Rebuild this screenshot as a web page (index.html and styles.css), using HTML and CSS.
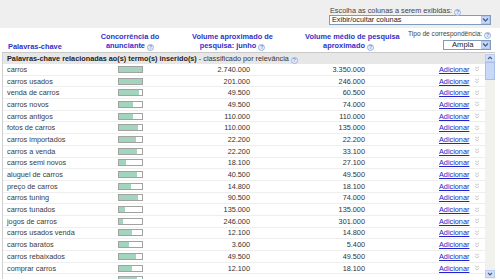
FILE: index.html
```html
<!DOCTYPE html>
<html lang="pt">
<head>
<meta charset="utf-8">
<title>Palavras-chave</title>
<link rel="stylesheet" href="styles.css">
</head>
<body>
<div class="top">
  <div class="colpick">
    <div class="lbl">Escolha as colunas a serem exibidas: <span class="help">?</span></div>
    <div class="select wide"><span class="sval">Exibir/ocultar colunas</span><span class="dd"><svg width="7" height="6" viewBox="0 0 7 6"><path d="M1 1.5 L3.5 4 L6 1.5" fill="none" stroke="#4d6185" stroke-width="1.4"/></svg></span></div>
  </div>
</div>
<div class="main">
  <div class="head">
    <div class="h h1">Palavras-chave</div>
    <div class="h">Concorrência do<br>anunciante <span class="help">?</span></div>
    <div class="h">Volume aproximado de<br>pesquisa: junho <span class="help">?</span></div>
    <div class="h">Volume médio de pesquisa<br>aproximado <span class="help">?</span></div>
    <div class="h5">
      <div class="tipo">Tipo de correspondência: <span class="help">?</span></div>
      <div class="select narrow"><span class="sval">Ampla</span><span class="dd"><svg width="7" height="6" viewBox="0 0 7 6"><path d="M1 1.5 L3.5 4 L6 1.5" fill="none" stroke="#4d6185" stroke-width="1.4"/></svg></span></div>
    </div>
  </div>
  <div class="scroll">
    <div class="list">
      <div class="sec"><b>Palavras-chave relacionadas ao(s) termo(s) inserido(s)</b> - classificado por relevância <span class="help">?</span></div>
      <div class="row"><span class="kw">carros</span><span class="bar"><span class="fill" style="width:100%"></span></span><span class="n n1">2.740.000</span><span class="n n2">3.350.000</span><span class="add"><a href="#">Adicionar</a><svg class="chev" width="6" height="6" viewBox="0 0 6 6"><path d="M1 0.8 L3 2.3 L5 0.8 M1 3.3 L3 4.8 L5 3.3" fill="none" stroke="#c4c4c4" stroke-width="0.9"/></svg></span></div>
      <div class="row"><span class="kw">carros usados</span><span class="bar"><span class="fill" style="width:100%"></span></span><span class="n n1">201.000</span><span class="n n2">246.000</span><span class="add"><a href="#">Adicionar</a><svg class="chev" width="6" height="6" viewBox="0 0 6 6"><path d="M1 0.8 L3 2.3 L5 0.8 M1 3.3 L3 4.8 L5 3.3" fill="none" stroke="#c4c4c4" stroke-width="0.9"/></svg></span></div>
      <div class="row"><span class="kw">venda de carros</span><span class="bar"><span class="fill" style="width:88%"></span></span><span class="n n1">49.500</span><span class="n n2">60.500</span><span class="add"><a href="#">Adicionar</a><svg class="chev" width="6" height="6" viewBox="0 0 6 6"><path d="M1 0.8 L3 2.3 L5 0.8 M1 3.3 L3 4.8 L5 3.3" fill="none" stroke="#c4c4c4" stroke-width="0.9"/></svg></span></div>
      <div class="row"><span class="kw">carros novos</span><span class="bar"><span class="fill" style="width:64%"></span></span><span class="n n1">49.500</span><span class="n n2">74.000</span><span class="add"><a href="#">Adicionar</a><svg class="chev" width="6" height="6" viewBox="0 0 6 6"><path d="M1 0.8 L3 2.3 L5 0.8 M1 3.3 L3 4.8 L5 3.3" fill="none" stroke="#c4c4c4" stroke-width="0.9"/></svg></span></div>
      <div class="row"><span class="kw">carros antigos</span><span class="bar"><span class="fill" style="width:64%"></span></span><span class="n n1">110.000</span><span class="n n2">110.000</span><span class="add"><a href="#">Adicionar</a><svg class="chev" width="6" height="6" viewBox="0 0 6 6"><path d="M1 0.8 L3 2.3 L5 0.8 M1 3.3 L3 4.8 L5 3.3" fill="none" stroke="#c4c4c4" stroke-width="0.9"/></svg></span></div>
      <div class="row"><span class="kw">fotos de carros</span><span class="bar"><span class="fill" style="width:86%"></span></span><span class="n n1">110.000</span><span class="n n2">135.000</span><span class="add"><a href="#">Adicionar</a><svg class="chev" width="6" height="6" viewBox="0 0 6 6"><path d="M1 0.8 L3 2.3 L5 0.8 M1 3.3 L3 4.8 L5 3.3" fill="none" stroke="#c4c4c4" stroke-width="0.9"/></svg></span></div>
      <div class="row"><span class="kw">carros importados</span><span class="bar"><span class="fill" style="width:75%"></span></span><span class="n n1">22.200</span><span class="n n2">22.200</span><span class="add"><a href="#">Adicionar</a><svg class="chev" width="6" height="6" viewBox="0 0 6 6"><path d="M1 0.8 L3 2.3 L5 0.8 M1 3.3 L3 4.8 L5 3.3" fill="none" stroke="#c4c4c4" stroke-width="0.9"/></svg></span></div>
      <div class="row"><span class="kw">carros a venda</span><span class="bar"><span class="fill" style="width:80%"></span></span><span class="n n1">22.200</span><span class="n n2">33.100</span><span class="add"><a href="#">Adicionar</a><svg class="chev" width="6" height="6" viewBox="0 0 6 6"><path d="M1 0.8 L3 2.3 L5 0.8 M1 3.3 L3 4.8 L5 3.3" fill="none" stroke="#c4c4c4" stroke-width="0.9"/></svg></span></div>
      <div class="row"><span class="kw">carros semi novos</span><span class="bar"><span class="fill" style="width:33%"></span></span><span class="n n1">18.100</span><span class="n n2">27.100</span><span class="add"><a href="#">Adicionar</a><svg class="chev" width="6" height="6" viewBox="0 0 6 6"><path d="M1 0.8 L3 2.3 L5 0.8 M1 3.3 L3 4.8 L5 3.3" fill="none" stroke="#c4c4c4" stroke-width="0.9"/></svg></span></div>
      <div class="row"><span class="kw">aluguel de carros</span><span class="bar"><span class="fill" style="width:82%"></span></span><span class="n n1">40.500</span><span class="n n2">49.500</span><span class="add"><a href="#">Adicionar</a><svg class="chev" width="6" height="6" viewBox="0 0 6 6"><path d="M1 0.8 L3 2.3 L5 0.8 M1 3.3 L3 4.8 L5 3.3" fill="none" stroke="#c4c4c4" stroke-width="0.9"/></svg></span></div>
      <div class="row"><span class="kw">preço de carros</span><span class="bar"><span class="fill" style="width:54%"></span></span><span class="n n1">14.800</span><span class="n n2">18.100</span><span class="add"><a href="#">Adicionar</a><svg class="chev" width="6" height="6" viewBox="0 0 6 6"><path d="M1 0.8 L3 2.3 L5 0.8 M1 3.3 L3 4.8 L5 3.3" fill="none" stroke="#c4c4c4" stroke-width="0.9"/></svg></span></div>
      <div class="row"><span class="kw">carros tuning</span><span class="bar"><span class="fill" style="width:85%"></span></span><span class="n n1">90.500</span><span class="n n2">74.000</span><span class="add"><a href="#">Adicionar</a><svg class="chev" width="6" height="6" viewBox="0 0 6 6"><path d="M1 0.8 L3 2.3 L5 0.8 M1 3.3 L3 4.8 L5 3.3" fill="none" stroke="#c4c4c4" stroke-width="0.9"/></svg></span></div>
      <div class="row"><span class="kw">carros tunados</span><span class="bar"><span class="fill" style="width:27%"></span></span><span class="n n1">135.000</span><span class="n n2">135.000</span><span class="add"><a href="#">Adicionar</a><svg class="chev" width="6" height="6" viewBox="0 0 6 6"><path d="M1 0.8 L3 2.3 L5 0.8 M1 3.3 L3 4.8 L5 3.3" fill="none" stroke="#c4c4c4" stroke-width="0.9"/></svg></span></div>
      <div class="row"><span class="kw">jogos de carros</span><span class="bar"><span class="fill" style="width:20%"></span></span><span class="n n1">246.000</span><span class="n n2">301.000</span><span class="add"><a href="#">Adicionar</a><svg class="chev" width="6" height="6" viewBox="0 0 6 6"><path d="M1 0.8 L3 2.3 L5 0.8 M1 3.3 L3 4.8 L5 3.3" fill="none" stroke="#c4c4c4" stroke-width="0.9"/></svg></span></div>
      <div class="row"><span class="kw">carros usados venda</span><span class="bar"><span class="fill" style="width:58%"></span></span><span class="n n1">12.100</span><span class="n n2">14.800</span><span class="add"><a href="#">Adicionar</a><svg class="chev" width="6" height="6" viewBox="0 0 6 6"><path d="M1 0.8 L3 2.3 L5 0.8 M1 3.3 L3 4.8 L5 3.3" fill="none" stroke="#c4c4c4" stroke-width="0.9"/></svg></span></div>
      <div class="row"><span class="kw">carros baratos</span><span class="bar"><span class="fill" style="width:47%"></span></span><span class="n n1">3.600</span><span class="n n2">5.400</span><span class="add"><a href="#">Adicionar</a><svg class="chev" width="6" height="6" viewBox="0 0 6 6"><path d="M1 0.8 L3 2.3 L5 0.8 M1 3.3 L3 4.8 L5 3.3" fill="none" stroke="#c4c4c4" stroke-width="0.9"/></svg></span></div>
      <div class="row"><span class="kw">carros rebaixados</span><span class="bar"><span class="fill" style="width:75%"></span></span><span class="n n1">49.500</span><span class="n n2">49.500</span><span class="add"><a href="#">Adicionar</a><svg class="chev" width="6" height="6" viewBox="0 0 6 6"><path d="M1 0.8 L3 2.3 L5 0.8 M1 3.3 L3 4.8 L5 3.3" fill="none" stroke="#c4c4c4" stroke-width="0.9"/></svg></span></div>
      <div class="row"><span class="kw">comprar carros</span><span class="bar"><span class="fill" style="width:58%"></span></span><span class="n n1">12.100</span><span class="n n2">18.100</span><span class="add"><a href="#">Adicionar</a><svg class="chev" width="6" height="6" viewBox="0 0 6 6"><path d="M1 0.8 L3 2.3 L5 0.8 M1 3.3 L3 4.8 L5 3.3" fill="none" stroke="#c4c4c4" stroke-width="0.9"/></svg></span></div>
      <div class="row"><span class="kw"></span><span class="bar"><span class="fill" style="width:80%"></span></span><span class="n n1"></span><span class="n n2"></span><span class="add"></span></div>
    </div>
    <div class="sbar">
      <div class="sbtn"><svg width="6" height="4" viewBox="0 0 6 4"><path d="M1 3 L3 1 L5 3" fill="none" stroke="#4d6185" stroke-width="1.2"/></svg></div>
      <div class="thumb"></div>
      <div class="track"></div>
      <div class="sbtn"><svg width="6" height="4" viewBox="0 0 6 4"><path d="M1 1 L3 3 L5 1" fill="none" stroke="#4d6185" stroke-width="1.2"/></svg></div>
    </div>
  </div>
</div>
</body>
</html>
```

FILE: styles.css
```css
html, body {
  margin: 0;
  padding: 0;
}
body {
  width: 500px;
  height: 280px;
  overflow: hidden;
  background: #fff;
  font-family: "Liberation Sans", Arial, sans-serif;
  font-size: 7.3px;
  color: #333;
}
.top {
  background: #efefef;
  height: 28px;
  display: flex;
  justify-content: flex-end;
  padding-right: 9px;
  box-sizing: border-box;
}
.colpick {
  width: 162px;
  padding-top: 6px;
}
.lbl {
  height: 9px;
  line-height: 9px;
  padding-left: 1px;
  color: #444;
  white-space: nowrap;
}
.select {
  display: flex;
  align-items: center;
  height: 10px;
  border: 1px solid #7f9db9;
  background: #fff;
  box-sizing: border-box;
  color: #222;
}
.sval {
  flex: 1;
  padding-left: 2px;
  line-height: 8px;
  white-space: nowrap;
}
.dd {
  width: 9px;
  height: 8px;
  background: #c6d5fb;
  border: 1px solid #b3c6f0;
  box-sizing: border-box;
  display: flex;
  align-items: center;
  justify-content: center;
}
.narrow {
  width: 48px;
  margin-top: 2px;
  font-size: 7.6px;
}
.narrow .sval {
  padding-left: 8px;
}
.help {
  display: inline-block;
  width: 5px;
  height: 5px;
  border-radius: 50%;
  border: 1px solid #9cb2dd;
  background: #eaf0fb;
  color: #6f8cc9;
  font-size: 5px;
  line-height: 5px;
  text-align: center;
  font-weight: bold;
  vertical-align: -1px;
}
.main {
  margin-left: 2px;
  width: 493px;
}
.head {
  display: grid;
  grid-template-columns: 98px 60px 145px 87px 1fr;
  height: 25px;
  border-bottom: 1px solid #c9c9c9;
  box-sizing: border-box;
}
.h {
  align-self: end;
  padding-bottom: 1px;
  text-align: center;
  font-weight: bold;
  font-size: 7.4px;
  line-height: 9px;
  color: #3131c8;
  white-space: nowrap;
}
.h1 {
  text-align: left;
  padding-left: 6px;
}
.h5 {
  display: flex;
  flex-direction: column;
  align-items: flex-end;
  padding-right: 4px;
}
.tipo {
  margin-top: 2px;
  height: 8px;
  line-height: 8px;
  font-size: 6.6px;
  color: #444;
  white-space: nowrap;
}
.scroll {
  display: flex;
  height: 226px;
}
.list {
  flex: 1;
  border-left: 1px solid #d0d0d0;
  overflow: hidden;
}
.sec {
  height: 11px;
  line-height: 11px;
  background: #e7e7e7;
  padding-left: 4px;
  white-space: nowrap;
  color: #333;
}
.sec b {
  color: #222;
}
.row {
  display: grid;
  grid-template-columns: 97px 60px 145px 87px 1fr;
  align-items: center;
  height: 11.7px;
  border-bottom: 1px solid #eeeeee;
  box-sizing: border-box;
  white-space: nowrap;
}
.kw {
  padding-left: 4px;
  color: #3a3a3a;
}
.bar {
  justify-self: center;
  width: 25px;
  height: 7px;
  border: 1px solid #a2a2a2;
  box-sizing: border-box;
  background: #fff;
  display: flex;
}
.fill {
  height: 100%;
  background: #a2d4be;
}
.n {
  text-align: right;
  color: #333;
}
.n1 {
  padding-right: 55px;
}
.n2 {
  padding-right: 27px;
}
.add {
  display: flex;
  align-items: center;
  padding-left: 47px;
}
.add a {
  color: #2323c8;
  text-decoration: underline;
}
.chev {
  margin-left: 5px;
}
.sbar {
  width: 10px;
  display: flex;
  flex-direction: column;
  background: #f1f1ee;
  padding: 1px 0;
  box-sizing: border-box;
}
.sbtn {
  height: 8px;
  background: #d3def8;
  border: 1px solid #bccbee;
  box-sizing: border-box;
  display: flex;
  align-items: center;
  justify-content: center;
}
.thumb {
  height: 18px;
  background: #c9d8f7;
  border: 1px solid #a9bde9;
  box-sizing: border-box;
}
.track {
  flex: 1;
}
```
